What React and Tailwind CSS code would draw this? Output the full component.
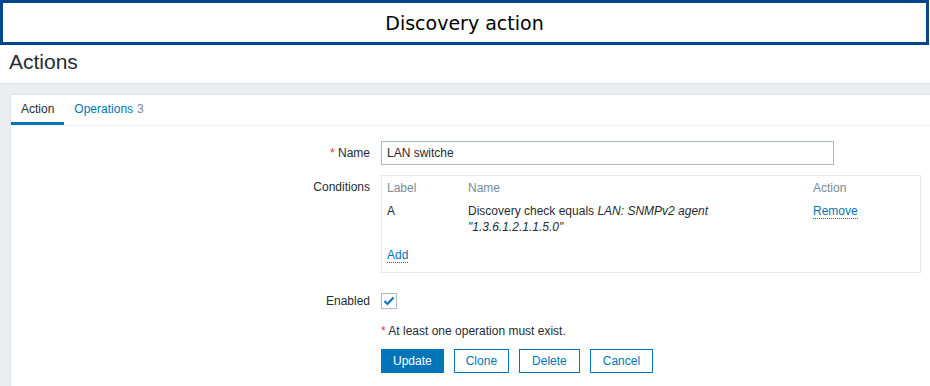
import React from "react";

const F = { fontFamily: '"Liberation Sans", Arial, sans-serif' };

export default function App() {
  return (
    <div className="w-[930px] h-[386px] overflow-hidden bg-white text-[12px] text-[#1f2c33]" style={F}>
      {/* Title box */}
      <div className="w-[929px] h-[45px] border-[3px] border-[#03468b] flex items-center justify-center">
        <span className="text-[19px] text-black leading-none pt-[1px]" style={{ fontFamily: '"DejaVu Sans", sans-serif' }}>
          Discovery action
        </span>
      </div>
      {/* Header */}
      <div className="h-[38px] flex items-center pl-[9px] pb-[5px]">
        <h1 className="text-[21px] leading-none text-[#1f2c33] font-normal">Actions</h1>
      </div>
      {/* Gray body */}
      <div className="bg-[#ebeef0] border-t border-[#dfe4e7] pt-[10px] pl-[10px] h-[304px]">
        <div className="bg-white border-t border-l border-[#dfe4e7] h-full">
          {/* Tabs */}
          <div className="flex h-[31px] border-b border-[#ebeef0]">
            <div className="px-[10px] flex items-center border-b-[3px] border-[#0275b8] text-[#1f2c33]">Action</div>
            <div className="px-[10px] flex items-center pb-[3px]">
              <span className="text-[#0275b8]">Operations</span>
              <span className="text-[#768d99] ml-[4px]">3</span>
            </div>
          </div>
          {/* Form */}
          <div className="pt-[15px]">
            {/* Name */}
            <div className="flex items-center">
              <div className="w-[359px] text-right">
                <span className="text-[#e33734]">*</span> Name
              </div>
              <div className="ml-[11px] w-[453px] h-[24px] border border-[#acbbc2] flex items-center px-[5px]">
                LAN switche
              </div>
            </div>
            {/* Conditions */}
            <div className="flex items-start mt-[10px]">
              <div className="w-[359px] text-right pt-[4px] leading-[16px]">Conditions</div>
              <div className="ml-[11px] w-[540px] h-[98px] border border-[#e2e6e8] px-[5px] pt-[4px] leading-[16px]">
                <div className="flex text-[#768d99]">
                  <div className="w-[81px]">Label</div>
                  <div className="w-[345px]">Name</div>
                  <div>Action</div>
                </div>
                <div className="flex mt-[7px]">
                  <div className="w-[81px]">A</div>
                  <div className="w-[345px]">
                    Discovery check equals <i>LAN: SNMPv2 agent</i>
                    <br />
                    <i>"1.3.6.1.2.1.1.5.0"</i>
                  </div>
                  <div>
                    <span className="text-[#0275b8] border-b border-dotted border-[#0275b8]">Remove</span>
                  </div>
                </div>
                <div className="mt-[12px]">
                  <span className="text-[#0275b8] border-b border-dotted border-[#0275b8]">Add</span>
                </div>
              </div>
            </div>
            {/* Enabled */}
            <div className="flex items-center mt-[19px]">
              <div className="w-[359px] text-right">Enabled</div>
              <div className="ml-[11px] w-[16px] h-[16px] border border-[#acbbc2] flex items-center justify-center">
                <svg width="12" height="10" viewBox="0 0 12 10">
                  <path d="M1.5 5 L4.5 8 L10.5 1.5" fill="none" stroke="#0275b8" strokeWidth="2" />
                </svg>
              </div>
            </div>
            {/* Note */}
            <div className="ml-[370px] mt-[13px] leading-[16px]">
              <span className="text-[#e33734]">*</span> At least one operation must exist.
            </div>
            {/* Buttons */}
            <div className="ml-[370px] mt-[10px] flex gap-[10px]">
              <button className="h-[24px] px-[11px] bg-[#0275b8] text-white border border-[#0275b8]">Update</button>
              <button className="h-[24px] px-[11px] bg-white text-[#0275b8] border border-[#0275b8]">Clone</button>
              <button className="h-[24px] px-[12px] bg-white text-[#0275b8] border border-[#0275b8]">Delete</button>
              <button className="h-[24px] px-[12px] bg-white text-[#0275b8] border border-[#0275b8]">Cancel</button>
            </div>
          </div>
        </div>
      </div>
    </div>
  );
}
